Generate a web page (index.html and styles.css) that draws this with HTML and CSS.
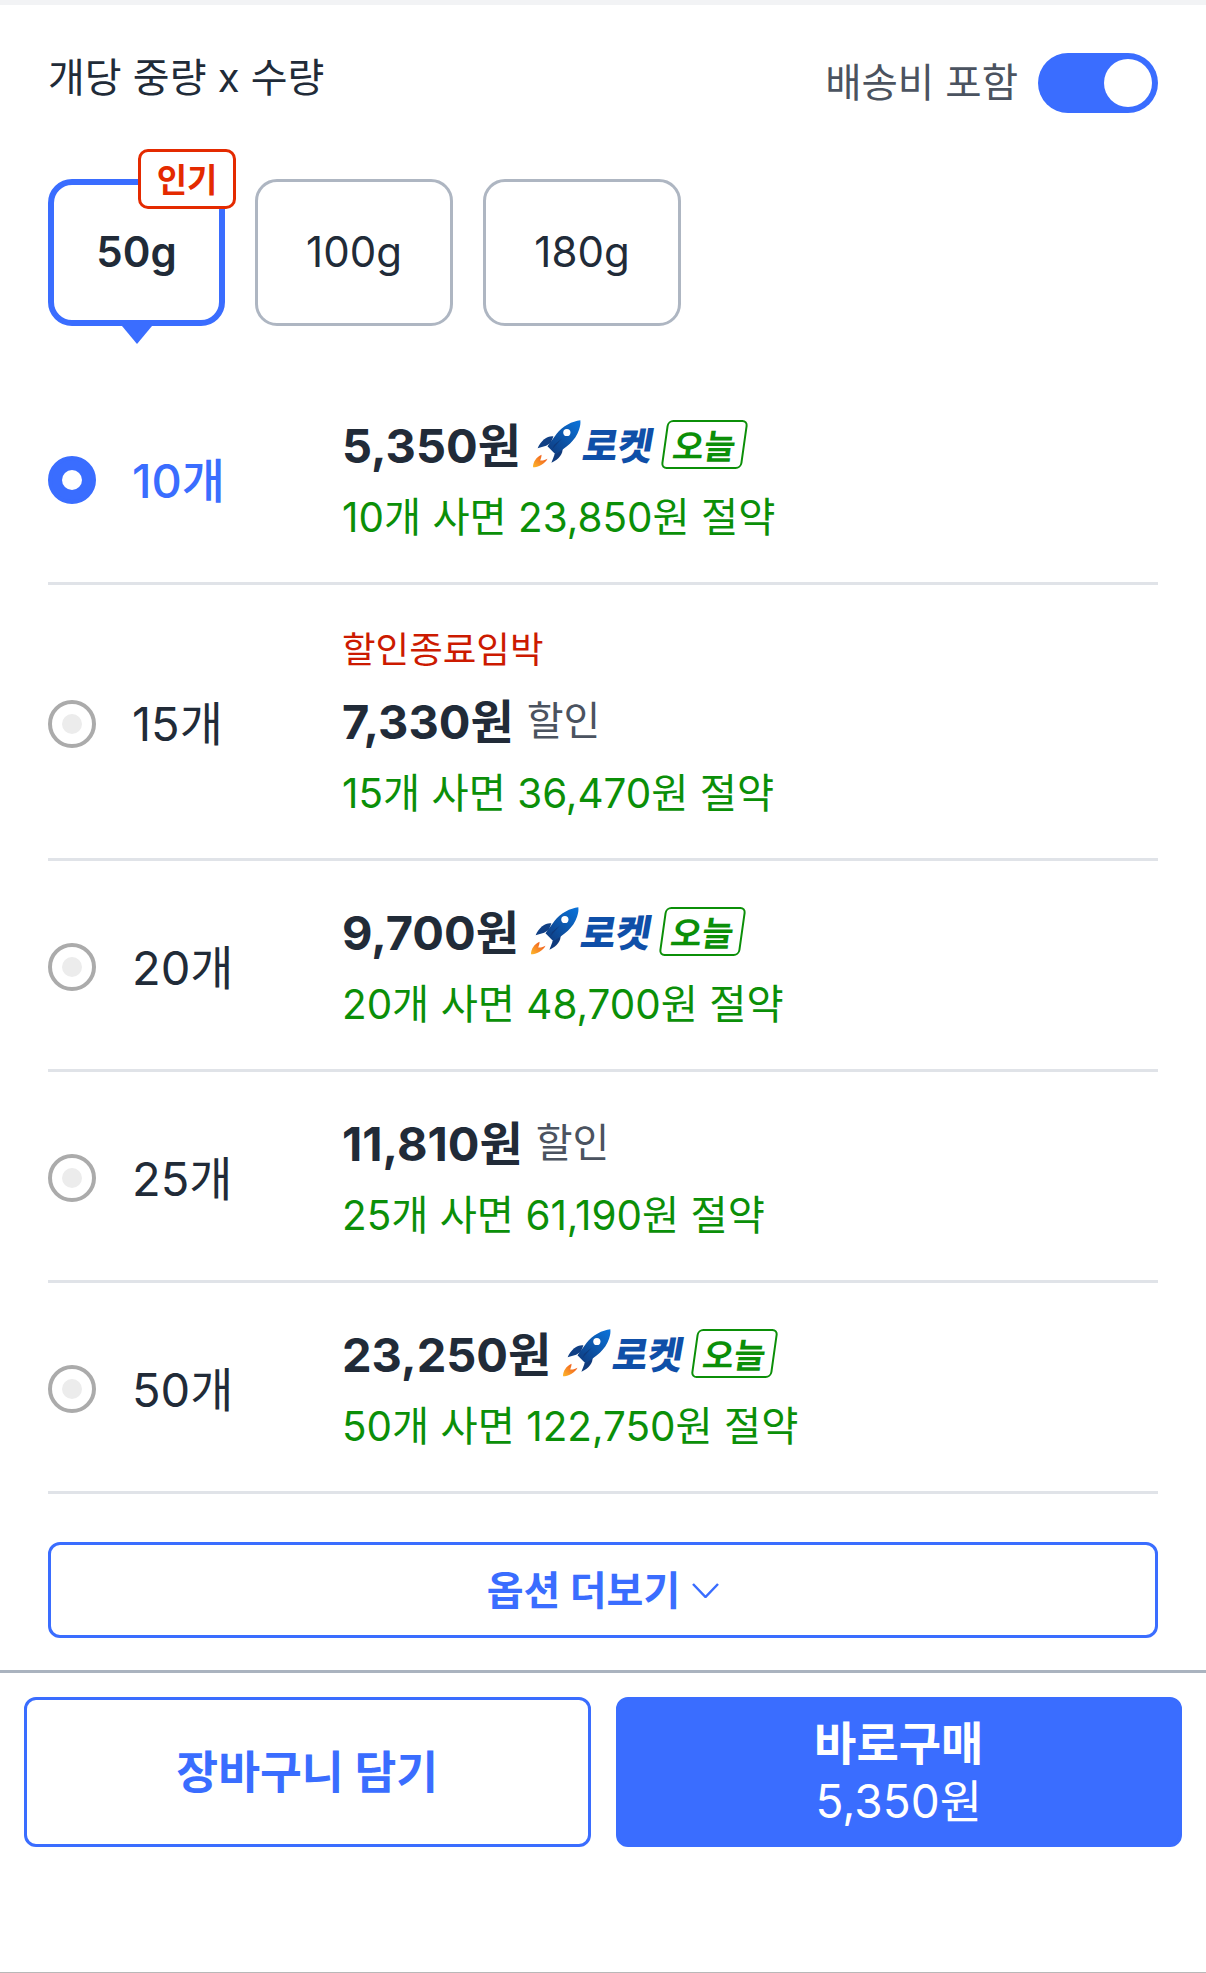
FILE: index.html
```html
<!DOCTYPE html>
<html lang="ko">
<head>
<meta charset="utf-8">
<title>옵션 선택</title>
<link rel="stylesheet" href="styles.css">
</head>
<body>
<svg class="defs" width="0" height="0" aria-hidden="true">
  <defs>
    <linearGradient id="hull" x1="1" y1="0" x2="0" y2="1">
      <stop offset="0" stop-color="#0a74dc"/>
      <stop offset="1" stop-color="#0f3a7c"/>
    </linearGradient>
    <linearGradient id="flame" x1="1" y1="0" x2="0" y2="1">
      <stop offset="0" stop-color="#ef4a1c"/>
      <stop offset="1" stop-color="#fdb92b"/>
    </linearGradient>
    <symbol id="rocket" viewBox="40 30 146 150">
      <path fill="#103f84" d="M102 82C84 80 66 92 54 118L80 110L94 102Z"/>
      <path fill="#0f3a7c" d="M130 116C132 134 120 152 96 162L106 136Z"/>
      <path fill="url(#hull)" d="M184 33C160 36 130 50 112 74L84 112L108 136C140 118 170 94 180 62C184 50 185 42 184 33Z"/>
      <path fill="#0f3a7c" d="M98 122L128 88L104 108Z"/>
      <circle cx="143" cy="70" r="11" fill="#fff"/>
      <path fill="url(#flame)" d="M66 138C50 145 40 160 40 176C56 176 76 166 84 150C76 155 68 156 62 155C64 150 66 144 66 138Z"/>
    </symbol>
  </defs>
</svg>

<div class="page">
  <header class="head">
    <div class="head-title">개당 중량 x 수량</div>
    <div class="ship">
      <span class="ship-label">배송비 포함</span>
      <span class="toggle"><span class="knob"></span></span>
    </div>
  </header>

  <div class="tabs">
    <div class="tab tab-on">50g<span class="hot">인기</span></div>
    <div class="tab">100g</div>
    <div class="tab">180g</div>
  </div>

  <ul class="list">
    <li class="row">
      <span class="radio radio-on"></span>
      <span class="qty qty-on">10개</span>
      <div class="info">
        <div class="price-line">
          <span class="price">5,350원</span>
          <svg class="rocket"><use href="#rocket"/></svg>
          <span class="brand">로켓</span>
          <span class="today"><span class="today-text">오늘</span></span>
        </div>
        <div class="save">10개 사면 23,850원 절약</div>
      </div>
    </li>
    <li class="row">
      <span class="radio"></span>
      <span class="qty">15개</span>
      <div class="info">
        <div class="urgent">할인종료임박</div>
        <div class="price-line">
          <span class="price">7,330원</span>
          <span class="sale">할인</span>
        </div>
        <div class="save">15개 사면 36,470원 절약</div>
      </div>
    </li>
    <li class="row">
      <span class="radio"></span>
      <span class="qty">20개</span>
      <div class="info">
        <div class="price-line">
          <span class="price">9,700원</span>
          <svg class="rocket"><use href="#rocket"/></svg>
          <span class="brand">로켓</span>
          <span class="today"><span class="today-text">오늘</span></span>
        </div>
        <div class="save">20개 사면 48,700원 절약</div>
      </div>
    </li>
    <li class="row">
      <span class="radio"></span>
      <span class="qty">25개</span>
      <div class="info">
        <div class="price-line">
          <span class="price">11,810원</span>
          <span class="sale">할인</span>
        </div>
        <div class="save">25개 사면 61,190원 절약</div>
      </div>
    </li>
    <li class="row">
      <span class="radio"></span>
      <span class="qty">50개</span>
      <div class="info">
        <div class="price-line">
          <span class="price">23,250원</span>
          <svg class="rocket"><use href="#rocket"/></svg>
          <span class="brand">로켓</span>
          <span class="today"><span class="today-text">오늘</span></span>
        </div>
        <div class="save">50개 사면 122,750원 절약</div>
      </div>
    </li>
  </ul>

  <button class="more" type="button">
    <span class="more-text">옵션 더보기</span>
    <svg class="chev" viewBox="0 0 27 15" width="27" height="15"><path d="M1 1L13.5 14L26 1"/></svg>
  </button>

  <footer class="foot">
    <button class="btn btn-cart" type="button"><span class="cart-text">장바구니 담기</span></button>
    <button class="btn btn-buy" type="button">
      <span class="buy-title">바로구매</span>
      <span class="buy-price">5,350원</span>
    </button>
  </footer>
</div>
</body>
</html>
```
FILE: styles.css
```css
* { box-sizing: border-box; }
html, body { margin: 0; padding: 0; background: #fff; }
body {
  font-family: Inter, "Noto Sans CJK KR", sans-serif;
  color: #212b38;
}
.defs { position: absolute; }
.page {
  height: 1973px;
  border-top: 5px solid #f2f3f5;
  border-bottom: 1px solid #b8b8b8;
  overflow: hidden;
}
.head {
  display: flex;
  justify-content: space-between;
  align-items: flex-start;
  padding: 48px 48px 0;
  height: 108px;
}
.head-title { font-size: 40px; line-height: 50px; }
.ship { display: flex; align-items: flex-start; gap: 20px; }
.ship-label { font-size: 39.5px; line-height: 60px; color: #4b5360; }
.toggle {
  display: flex;
  align-items: center;
  justify-content: flex-end;
  width: 120px;
  height: 60px;
  padding-right: 6px;
  border-radius: 30px;
  background: #3a6dff;
}
.knob { width: 48px; height: 48px; border-radius: 50%; background: #fff; }

.tabs { display: flex; gap: 30px; padding: 66px 48px 0; }
.tab {
  position: relative;
  display: flex;
  align-items: center;
  justify-content: center;
  width: 198px;
  height: 147px;
  padding-bottom: 2px;
  border: 3px solid #aeb6c2;
  border-radius: 22px;
  font-size: 42px;
}
.tab-on {
  width: 177px;
  border: 6px solid #3a6dff;
  border-radius: 24px;
  font-weight: 600;
}
.tab-on::after {
  content: "";
  position: absolute;
  left: 50%;
  bottom: -24px;
  margin-left: -15px;
  border-style: solid;
  border-width: 18px 15px 0;
  border-color: #3a6dff transparent transparent;
}
.hot {
  position: absolute;
  top: -36px;
  right: -17px;
  display: flex;
  align-items: center;
  justify-content: center;
  width: 98px;
  height: 60px;
  padding-bottom: 3px;
  border: 3px solid #e42a00;
  border-radius: 10px;
  background: #fff;
  color: #e42a00;
  font-size: 33px;
  font-weight: 700;
}

.list { list-style: none; margin: 48px 48px 0; padding: 0; }
.row {
  display: flex;
  align-items: center;
  padding: 34px 0 30px;
  border-bottom: 3px solid #e0e3e8;
}
.radio {
  position: relative;
  flex: none;
  display: flex;
  align-items: center;
  justify-content: center;
  width: 48px;
  height: 48px;
  border: 4px solid #ababab;
  border-radius: 50%;
}
.radio::after {
  content: "";
  width: 20px;
  height: 20px;
  border-radius: 50%;
  background: #ececec;
}
.radio-on { border-color: #3a6dff; background: #3a6dff; }
.radio-on::after { background: #fff; }
.qty { flex: none; width: 210px; margin-left: 36px; padding-bottom: 6px; font-size: 47px; }
.qty-on { color: #3a6dff; font-weight: 500; }
.info { flex: 1; min-width: 0; }
.price-line { display: flex; align-items: center; height: 72px; padding-bottom: 4px; }
.price { font-size: 47px; font-weight: 700; }
.sale { margin-left: 13px; font-size: 40px; color: #4b5360; }
.rocket { flex: none; width: 48px; height: 50px; margin: 4px 0 0 12px; }
.brand {
  margin: 2px 0 0 3px;
  font-size: 38px;
  font-weight: 900;
  color: #0f4fa8;
  transform: skewX(-10deg);
}
.today {
  display: flex;
  align-items: center;
  justify-content: center;
  width: 81px;
  height: 49px;
  margin: 4px 0 0 10px;
  border: 2px solid #0b8f08;
  border-radius: 6px;
  transform: skewX(-8deg);
}
.today-text { font-size: 34px; font-weight: 700; color: #0b8f08; }
.save { height: 72px; line-height: 75px; font-size: 40.4px; color: #0b8f08; }
.urgent { height: 65px; line-height: 62px; font-size: 36.5px; color: #cc1a00; }

.more {
  display: flex;
  align-items: center;
  justify-content: center;
  gap: 12px;
  width: 1110px;
  height: 96px;
  margin: 48px 48px 0;
  border: 3px solid #3a6dff;
  border-radius: 12px;
  background: #fff;
  color: #3a6dff;
  font: 700 40px Inter, "Noto Sans CJK KR", sans-serif;
}
.more-text { padding-bottom: 4px; }
.chev { fill: none; stroke: #3a6dff; stroke-width: 2.5; }

.foot {
  display: flex;
  gap: 25px;
  margin-top: 32px;
  padding: 24px 24px 0;
  border-top: 3px solid #aab3bf;
}
.btn {
  display: flex;
  flex: 1;
  flex-direction: column;
  align-items: center;
  justify-content: center;
  height: 150px;
  border: 3px solid #3a6dff;
  border-radius: 12px;
  font-family: Inter, "Noto Sans CJK KR", sans-serif;
}
.btn-cart { background: #fff; color: #3a6dff; font-size: 45.5px; font-weight: 700; }
.cart-text { padding-bottom: 7px; }
.btn-buy { background: #3a6dff; color: #fff; font-size: 46px; }
.buy-title { line-height: 58px; font-weight: 700; }
.buy-price { line-height: 58px; }
```
